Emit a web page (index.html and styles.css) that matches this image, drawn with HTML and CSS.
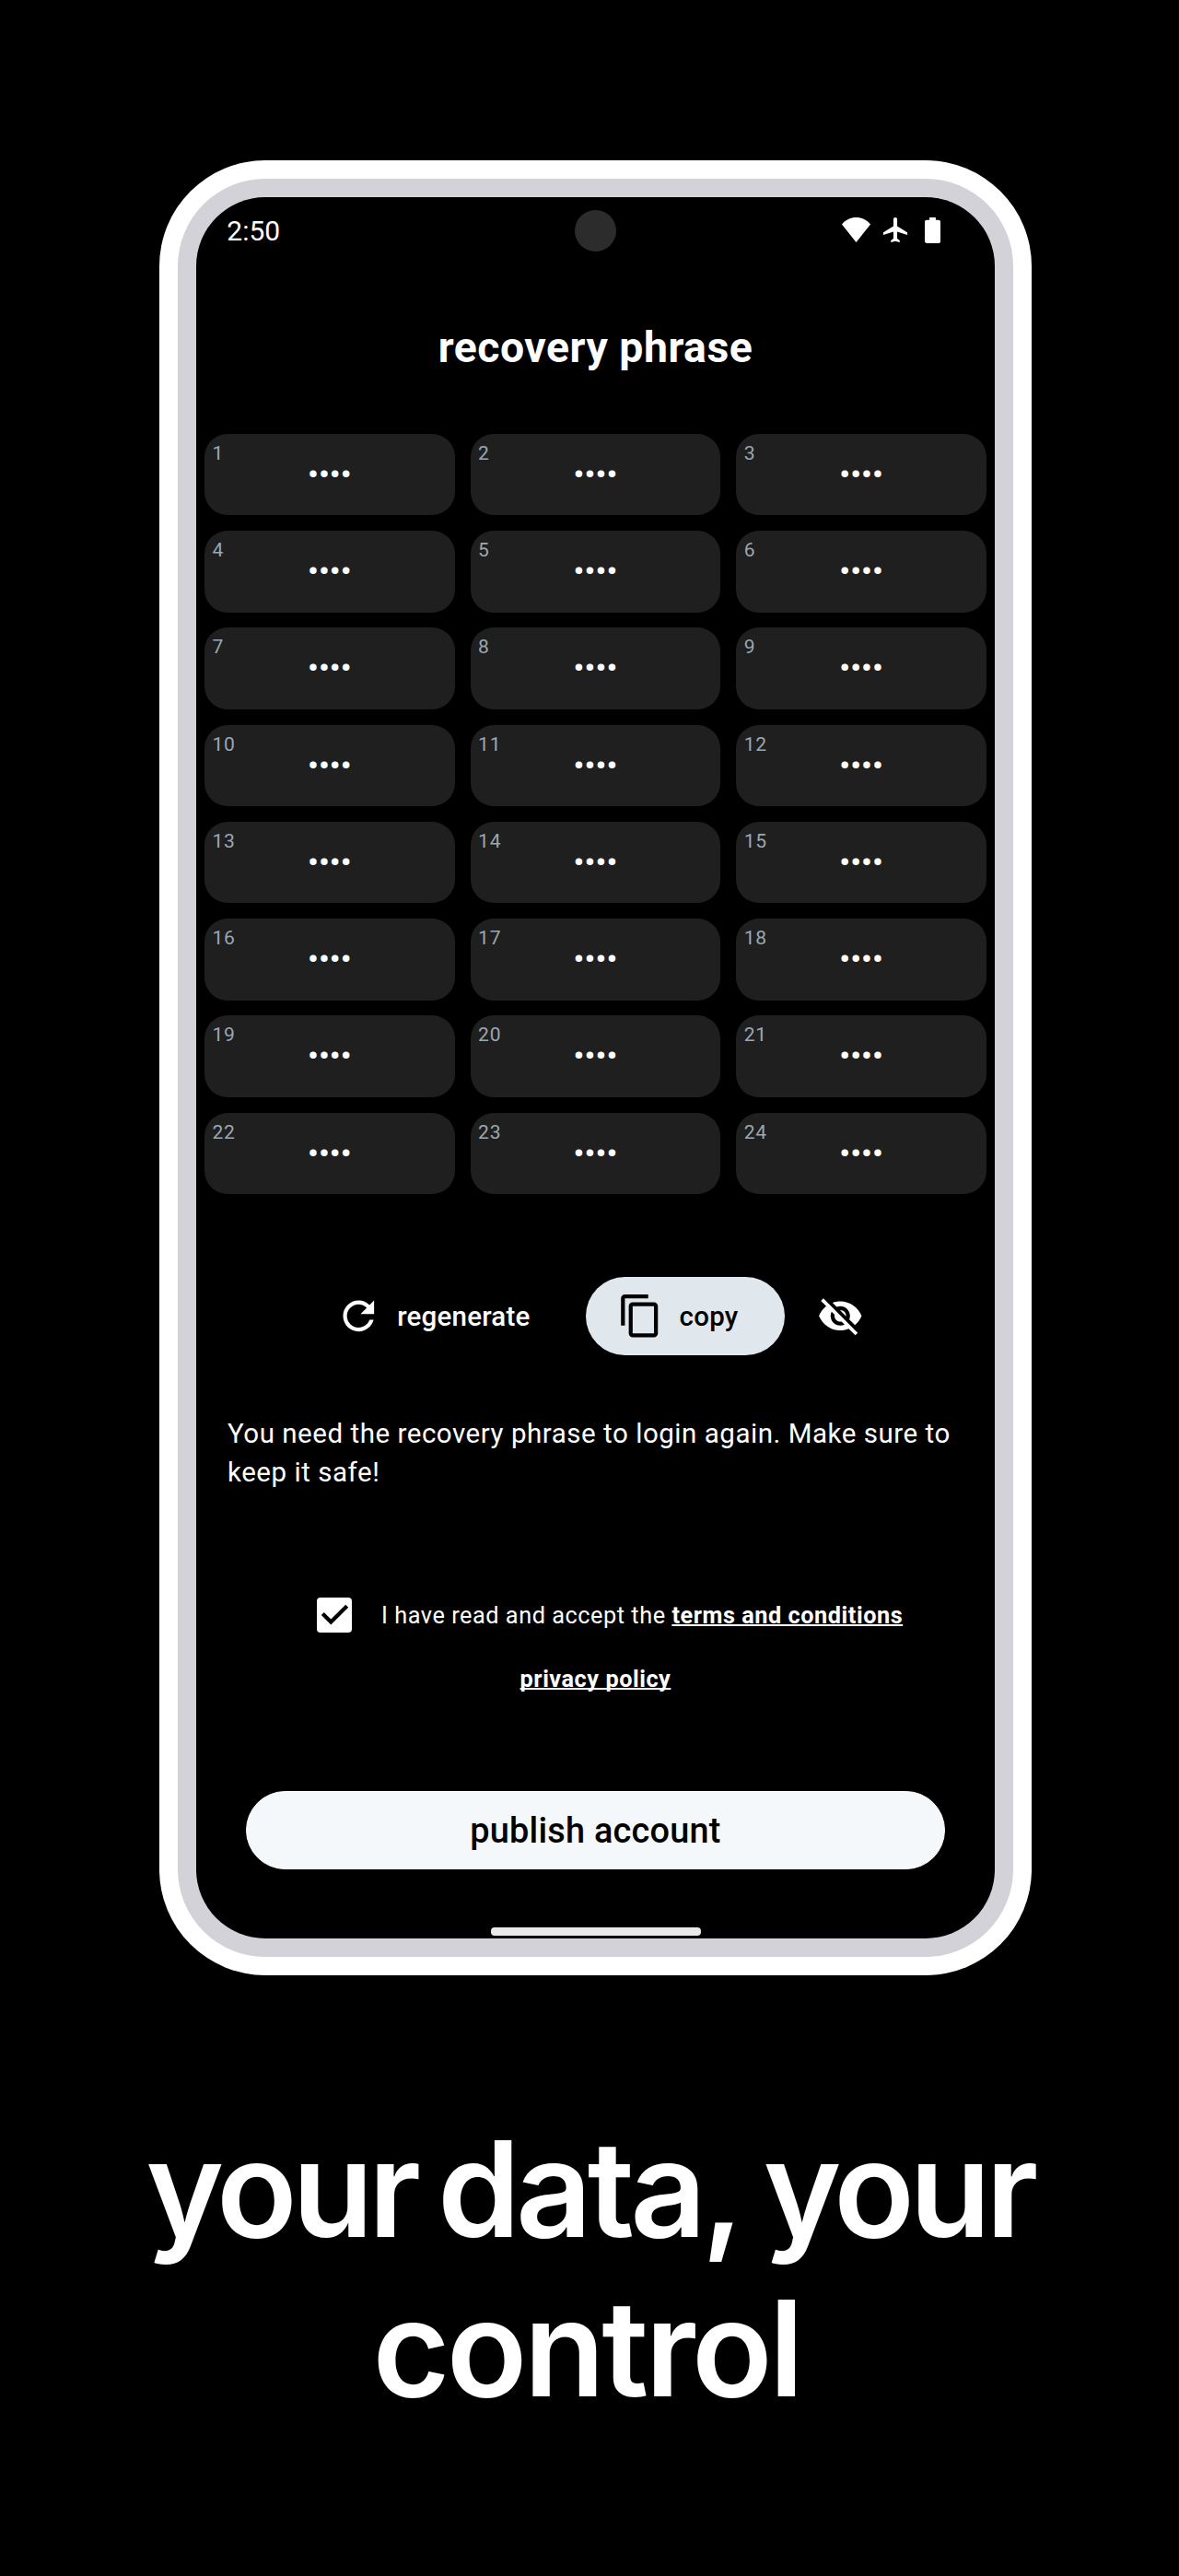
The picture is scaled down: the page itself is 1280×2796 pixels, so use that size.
FILE: index.html
```html
<!DOCTYPE html>
<html lang="en">
<head>
<meta charset="utf-8">
<title>Recovery phrase</title>
<link rel="stylesheet" href="styles.css">
</head>
<body>
<div class="phone">
  <div class="bezel">
    <main class="screen">
      <header class="status">
        <span class="clock">2:50</span>
        <span class="camera"></span>
        <span class="status-icons">
          <svg class="wifi" width="31" height="27" viewBox="0 0 31 27"><path d="M15.500 27 0 7.500C4 2.500 9.500 0 15.500 0S27 2.500 31 7.500z"/></svg>
          <svg class="plane" width="26" height="27" viewBox="2 2 19 20" preserveAspectRatio="none"><path d="M21 16v-2l-8-5V3.500c0-.83-.67-1.500-1.500-1.500S10 2.670 10 3.500V9l-8 5v2l8-2.500V19l-2 1.500V22l3.500-1 3.500 1v-1.500L13 19v-5.500l8 2.500z"/></svg>
          <svg class="battery" width="17" height="28" viewBox="7 2 10 20" preserveAspectRatio="none"><path d="M15.670 4H14V2h-4v2H8.330C7.600 4 7 4.600 7 5.330v15.330C7 21.400 7.600 22 8.330 22h7.330c.74 0 1.340-.6 1.340-1.330V5.330C17 4.600 16.400 4 15.670 4z"/></svg>
        </span>
      </header>
      <h1 class="title">recovery phrase</h1>
      <ol class="words">
        <li class="word"><span class="num">1</span>••••</li>
        <li class="word"><span class="num">2</span>••••</li>
        <li class="word"><span class="num">3</span>••••</li>
        <li class="word"><span class="num">4</span>••••</li>
        <li class="word"><span class="num">5</span>••••</li>
        <li class="word"><span class="num">6</span>••••</li>
        <li class="word"><span class="num">7</span>••••</li>
        <li class="word"><span class="num">8</span>••••</li>
        <li class="word"><span class="num">9</span>••••</li>
        <li class="word"><span class="num">10</span>••••</li>
        <li class="word"><span class="num">11</span>••••</li>
        <li class="word"><span class="num">12</span>••••</li>
        <li class="word"><span class="num">13</span>••••</li>
        <li class="word"><span class="num">14</span>••••</li>
        <li class="word"><span class="num">15</span>••••</li>
        <li class="word"><span class="num">16</span>••••</li>
        <li class="word"><span class="num">17</span>••••</li>
        <li class="word"><span class="num">18</span>••••</li>
        <li class="word"><span class="num">19</span>••••</li>
        <li class="word"><span class="num">20</span>••••</li>
        <li class="word"><span class="num">21</span>••••</li>
        <li class="word"><span class="num">22</span>••••</li>
        <li class="word"><span class="num">23</span>••••</li>
        <li class="word"><span class="num">24</span>••••</li>
      </ol>
      <div class="actions">
        <button class="action">
          <svg class="icon" viewBox="0 0 24 24"><path d="M17.650 6.350C16.200 4.900 14.210 4 12 4c-4.420 0-7.990 3.580-7.990 8s3.570 8 7.990 8c3.730 0 6.840-2.550 7.730-6h-2.080c-.82 2.330-3.040 4-5.650 4-3.310 0-6-2.690-6-6s2.690-6 6-6c1.660 0 3.140.69 4.220 1.780L13 11h7V4l-2.350 2.350z"/></svg>
          <span>regenerate</span>
        </button>
        <button class="action action-filled">
          <svg class="icon" viewBox="0 0 24 24"><path d="M16 1H4c-1.100 0-2 .9-2 2v14h2V3h12V1zm3 4H8c-1.100 0-2 .9-2 2v14c0 1.100.9 2 2 2h11c1.100 0 2-.9 2-2V7c0-1.100-.9-2-2-2zm0 16H8V7h11v14z"/></svg>
          <span>copy</span>
        </button>
        <button class="action" aria-label="hide">
          <svg class="icon" viewBox="0 0 24 24"><path d="M12 7c2.760 0 5 2.240 5 5 0 .65-.13 1.260-.36 1.830l2.920 2.920c1.510-1.260 2.700-2.890 3.430-4.750-1.730-4.390-6-7.500-11-7.500-1.400 0-2.740.25-3.980.7l2.160 2.160C10.740 7.130 11.350 7 12 7zM2 4.270l2.280 2.280.46.46C3.080 8.300 1.780 10.020 1 12c1.730 4.390 6 7.500 11 7.500 1.550 0 3.030-.3 4.380-.84l.42.42L19.730 22 21 20.730 3.270 3 2 4.270zM7.530 9.800l1.550 1.550c-.05.21-.08.43-.08.65 0 1.660 1.340 3 3 3 .22 0 .44-.03.65-.08l1.550 1.550c-.67.33-1.410.53-2.200.53-2.760 0-5-2.240-5-5 0-.79.2-1.530.53-2.200zm4.310-.78l3.150 3.150.02-.16c0-1.660-1.340-3-3-3l-.17.010z"/></svg>
        </button>
      </div>
      <p class="hint">You need the recovery phrase to login again. Make sure to keep it safe!</p>
      <div class="consent">
        <svg class="checkbox" viewBox="0 0 38 38"><rect width="38" height="38" rx="4"/><path d="M6.300 17.600 15.300 26.600 32.700 9.200"/></svg>
        <span class="consent-text">I have read and accept the <a class="link">terms and conditions</a></span>
      </div>
      <a class="link privacy">privacy policy</a>
      <button class="publish">publish account</button>
      <div class="home-bar"></div>
    </main>
  </div>
</div>
<h2 class="tagline">
  <span class="line"><span class="w1">your</span><span class="w2">data,</span><span class="w3">your</span></span>
  <span class="line line-last">control</span>
</h2>
</body>
</html>
```
FILE: styles.css
```css
* { box-sizing: border-box; }
body {
  margin: 0;
  height: 2796px;
  overflow: hidden;
  background: #000;
  color: #fff;
  font-family: Roboto, sans-serif;
  display: flow-root;
}
button {
  border: 0;
  padding: 0;
  background: none;
  color: inherit;
  font: inherit;
}
.phone {
  width: 947px;
  height: 1970px;
  margin: 174px 0 0 173px;
  padding: 20px;
  border-radius: 115px;
  background: #fff;
}
.bezel {
  height: 100%;
  padding: 20.3px;
  border-radius: 95px;
  background: #d2d2d8;
}
.screen {
  height: 100%;
  display: flex;
  flex-direction: column;
  border-radius: 75px;
  background: #000;
}
.status {
  height: 73px;
  flex: none;
  display: grid;
  grid-template-columns: 1fr 45px 1fr;
  align-items: center;
  padding: 0 59px 0 33px;
}
.clock { font-size: 30px; line-height: 36px; }
.camera {
  width: 45px;
  height: 45px;
  margin-left: 13px;
  border-radius: 50%;
  background: #2c2c2c;
}
.status-icons {
  display: flex;
  justify-content: flex-end;
  align-items: center;
  gap: 14px;
  padding-bottom: 2px;
  fill: #fff;
}
.battery { margin-left: 5px; }
.title {
  margin: 62px 0 0;
  text-align: center;
  font-size: 46.4px;
  font-weight: 700;
  line-height: 57px;
  letter-spacing: 0.5px;
}
.words {
  list-style: none;
  margin: 64.7px 0 0;
  padding: 0 8.7px;
  display: grid;
  grid-template-columns: repeat(3, 1fr);
  gap: 16.86px;
}
.word {
  position: relative;
  height: 88.4px;
  border-radius: 25px;
  background: #1f1f1f;
  text-align: center;
  font-size: 33.7px;
  font-weight: 500;
  line-height: 88.4px;
  letter-spacing: 0.21px;
}
.num {
  position: absolute;
  top: 8px;
  left: 8.4px;
  font-size: 21.07px;
  font-weight: 400;
  line-height: 25px;
  letter-spacing: 0.84px;
  color: #9ba7b2;
}
.actions {
  height: 84.5px;
  margin: 90px 0 0 150.5px;
  display: flex;
  align-items: center;
}
.action {
  height: 100%;
  display: flex;
  align-items: center;
  gap: 16.86px;
  font-size: 29.5px;
  font-weight: 500;
  letter-spacing: 0.21px;
}
.action span { padding-top: 2px; }
.action-filled {
  margin: 0 35px 0 61px;
  padding: 0 50.6px 0 33.7px;
  border-radius: 43px;
  background: #e0e7ed;
  color: #000;
}
.icon { width: 50.57px; height: 50.57px; fill: currentColor; }
.hint {
  margin: 64px 0 0;
  padding: 0 33.7px;
  font-size: 29.5px;
  line-height: 42.14px;
  letter-spacing: 0.53px;
}
.consent, .privacy {
  font-size: 25.3px;
  letter-spacing: 0.53px;
  line-height: 30px;
}
.consent {
  height: 38px;
  margin: 115.3px 0 0 131.2px;
  display: flex;
  align-items: center;
  gap: 31.5px;
}
.consent-text { padding-top: 2px; }
.checkbox { width: 38px; height: 38px; fill: #fff; }
.checkbox path { fill: none; stroke: #000; stroke-width: 4.2; }
.link {
  font-weight: 700;
  text-decoration: underline;
  text-decoration-thickness: 1.5px;
  text-underline-offset: 1px;
  text-decoration-skip-ink: none;
}
.privacy { margin-top: 36px; text-align: center; }
.publish {
  height: 85px;
  margin: 106px 53.5px 0;
  border: 1.5px solid #fff;
  border-radius: 43px;
  background: #f4f8fb;
  color: #000;
  font-size: 37.9px;
  font-weight: 500;
  letter-spacing: 0.21px;
}
.home-bar {
  width: 228px;
  height: 9px;
  margin: 63px auto 0;
  border-radius: 4px;
  background: #eaeaea;
}
.tagline {
  margin: 145px 0 0 158.5px;
  font-family: Inter, sans-serif;
  font-size: 144px;
  font-weight: 600;
  line-height: 173px;
  letter-spacing: -5.5px;
}
.line { display: flex; }
.w2 { margin-left: 23.5px; letter-spacing: -5px; }
.w3 { margin-left: 26px; }
.line-last { margin-left: 246px; letter-spacing: -3.6px; }
```
